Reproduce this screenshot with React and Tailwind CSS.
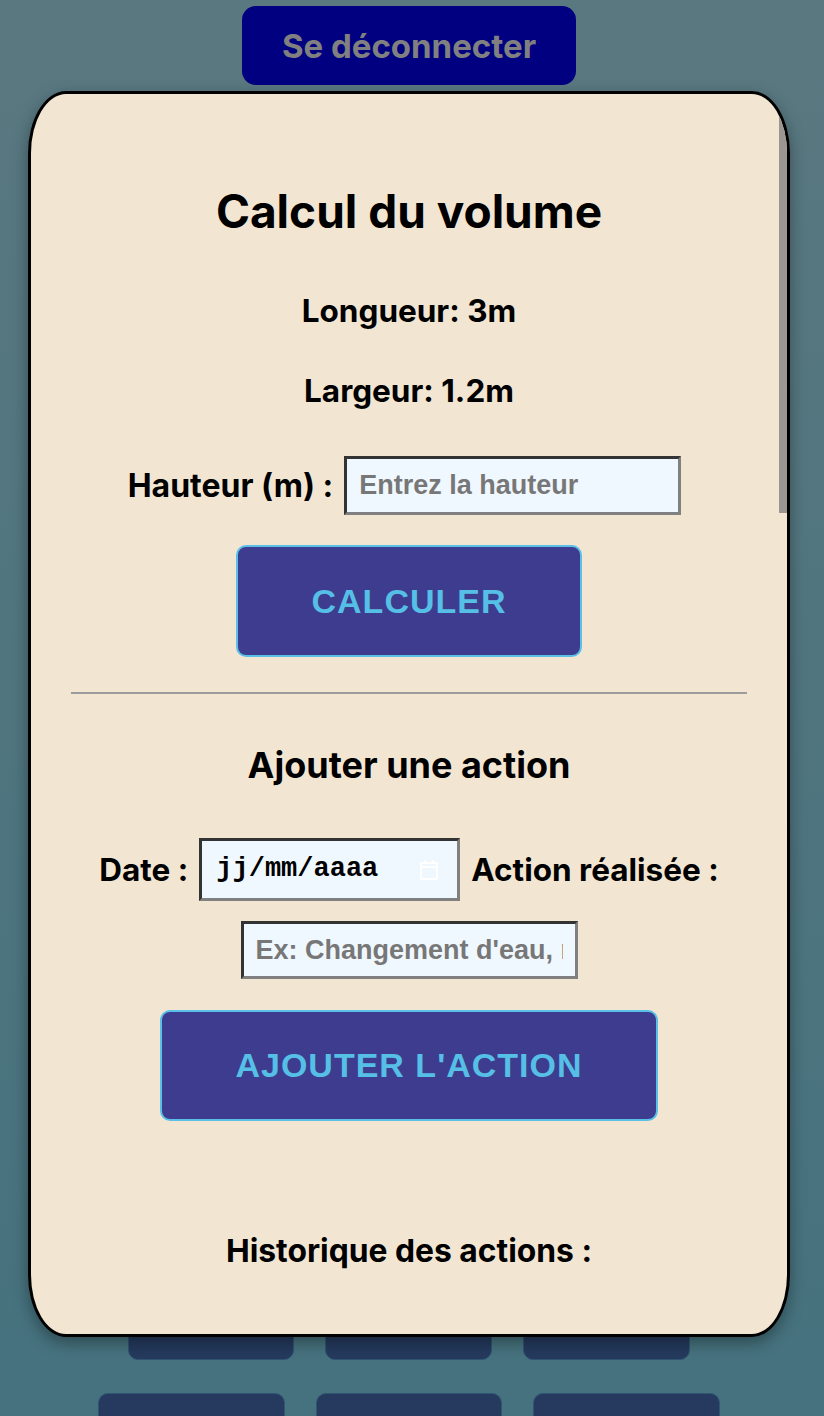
import React from "react";

const inputCls =
  "bg-[#f0f8ff] border-[3px] border-t-[#333333] border-l-[#333333] border-r-[#808080] border-b-[#808080] px-[12px] text-[27px] font-bold text-black outline-none placeholder:text-[#777777] font-['Liberation_Sans',Arial,sans-serif]";

const bigBtn =
  "bg-[#3e3c8f] border-2 border-[#5bc0e8] rounded-[10px] text-[#56bfe6] font-bold text-[34px] tracking-[1px] uppercase font-['Liberation_Sans',Arial,sans-serif]";

const CalendarIcon = () => (
  <svg width="20" height="22" viewBox="0 0 20 22" fill="none" stroke="#ffffff" strokeWidth="2">
    <rect x="2" y="4" width="16" height="16" rx="1" />
    <line x1="2" y1="8" x2="18" y2="8" />
    <line x1="6" y1="1" x2="6" y2="5" />
    <line x1="14" y1="1" x2="14" y2="5" />
  </svg>
);

const BackRow = ({ widths, gap }) => (
  <div className="flex justify-center" style={{ gap }}>
    {widths.map((w, i) => (
      <div
        key={i}
        className="h-[64px] rounded-[10px] bg-[#253a5e] border border-[#2f5572]"
        style={{ width: w }}
      />
    ))}
  </div>
);

export default function App() {
  return (
    <div className="relative min-h-[1416px] w-full overflow-hidden bg-gradient-to-b from-[#5a7880] to-[#44727e] font-['Inter',sans-serif]">
      <div className="relative w-[818px]">
        <div className="flex justify-center pt-[6px]">
          <button className="w-[334px] h-[79px] rounded-[14px] bg-[#000080] text-[#808080] text-[33px] font-bold pt-[2px]">
            Se déconnecter
          </button>
        </div>

        <div className="mt-[1211px] flex flex-col gap-[33px]">
          <BackRow widths={[166, 167, 167]} gap={31} />
          <BackRow widths={[187, 186, 187]} gap={31} />
        </div>

        <div className="absolute top-[91px] left-[28px] w-[762px] h-[1246px] rounded-[5%] border-[3px] border-black bg-[#f2e6d3] shadow-[0_6px_16px_rgba(0,0,0,0.35)] overflow-hidden">
          <div className="absolute right-[0px] top-[0px] w-[8px] h-[419px] bg-[#9a9793]" />
          <div className="flex flex-col items-center px-[40px] pt-[90px] text-black">
            <h2 className="text-[46px] leading-[54px] font-bold">Calcul du volume</h2>
            <p className="mt-[56px] text-[31.5px] leading-[34px] font-bold">Longueur: 3m</p>
            <p className="mt-[46px] text-[31.5px] leading-[34px] font-bold">Largeur: 1.2m</p>

            <div className="mt-[48px] mr-[9px] flex items-center gap-[11px]">
              <label className="text-[32px] font-bold">Hauteur (m) :</label>
              <input className={`${inputCls} w-[337px] h-[59px]`} placeholder="Entrez la hauteur" />
            </div>

            <button className={`${bigBtn} mt-[30px] w-[346px] h-[112px]`}>Calculer</button>

            <hr className="mt-[35px] w-full border-0 h-[2px] bg-[#9c9c9c]" />

            <h3 className="mt-[50px] text-[36px] leading-[42px] font-bold">Ajouter une action</h3>

            <div className="mt-[52px] flex items-center gap-[11px]">
              <label className="text-[31.5px] font-bold">Date :</label>
              <div className="w-[261px] h-[63px] bg-[#f0f8ff] border-[3px] border-t-[#333333] border-l-[#333333] border-r-[#808080] border-b-[#808080] pl-[14px] pr-[18px] flex items-center justify-between">
                <span className="text-[27px] font-['Liberation_Mono','DejaVu_Sans_Mono',monospace] font-bold">
                  jj/mm/aaaa
                </span>
                <CalendarIcon />
              </div>
              <label className="text-[31.5px] font-bold">Action réalisée :</label>
            </div>

            <input
              className={`${inputCls} mt-[20px] w-[337px] h-[58px]`}
              placeholder="Ex: Changement d'eau, nettoyage..."
            />

            <button className={`${bigBtn} mt-[31px] w-[498px] h-[111px]`}>Ajouter l'action</button>

            <h4 className="mt-[112px] text-[31.8px] leading-[36px] font-bold">Historique des actions :</h4>
          </div>
        </div>
      </div>
    </div>
  );
}
